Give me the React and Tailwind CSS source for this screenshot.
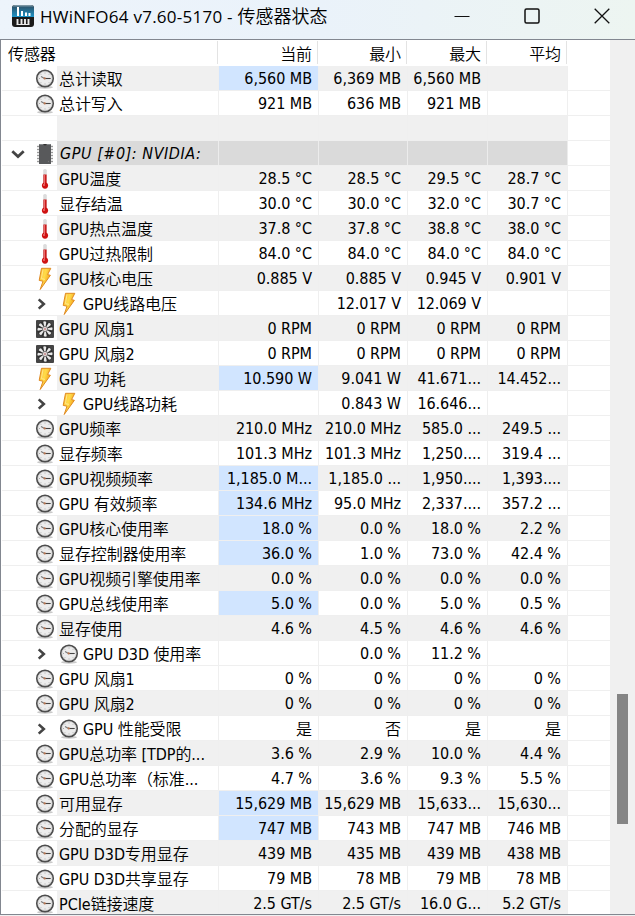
import React from 'react';

const ROWS = [
  { icon: 'clock', name: '总计读取', bg: 'grey', values: ['6,560 MB', '6,369 MB', '6,560 MB', ''], hot: true },
  { icon: 'clock', name: '总计写入', values: ['921 MB', '636 MB', '921 MB', ''] },
  { name: '', bg: 'grey', values: ['', '', '', ''] },
  { icon: 'chip', name: 'GPU [#0]: NVIDIA:', bg: 'group', values: ['', '', '', ''] },
  { icon: 'temp', name: 'GPU温度', bg: 'grey', values: ['28.5 °C', '28.5 °C', '29.5 °C', '28.7 °C'] },
  { icon: 'temp', name: '显存结温', values: ['30.0 °C', '30.0 °C', '32.0 °C', '30.7 °C'] },
  { icon: 'temp', name: 'GPU热点温度', bg: 'grey', values: ['37.8 °C', '37.8 °C', '38.8 °C', '38.0 °C'] },
  { icon: 'temp', name: 'GPU过热限制', values: ['84.0 °C', '84.0 °C', '84.0 °C', '84.0 °C'] },
  { icon: 'bolt', name: 'GPU核心电压', bg: 'grey', values: ['0.885 V', '0.885 V', '0.945 V', '0.901 V'] },
  { icon: 'bolt', name: 'GPU线路电压', sub: true, values: ['', '12.017 V', '12.069 V', ''] },
  { icon: 'fan', name: 'GPU 风扇1', bg: 'grey', values: ['0 RPM', '0 RPM', '0 RPM', '0 RPM'] },
  { icon: 'fan', name: 'GPU 风扇2', values: ['0 RPM', '0 RPM', '0 RPM', '0 RPM'] },
  { icon: 'bolt', name: 'GPU 功耗', bg: 'grey', values: ['10.590 W', '9.041 W', '41.671...', '14.452...'], hot: true },
  { icon: 'bolt', name: 'GPU线路功耗', sub: true, values: ['', '0.843 W', '16.646...', ''] },
  { icon: 'clock', name: 'GPU频率', bg: 'grey', values: ['210.0 MHz', '210.0 MHz', '585.0 ...', '249.5 ...'] },
  { icon: 'clock', name: '显存频率', values: ['101.3 MHz', '101.3 MHz', '1,250....', '319.4 ...'] },
  { icon: 'clock', name: 'GPU视频频率', bg: 'grey', values: ['1,185.0 M...', '1,185.0 ...', '1,950....', '1,393....'], hot: true },
  { icon: 'clock', name: 'GPU 有效频率', values: ['134.6 MHz', '95.0 MHz', '2,337....', '357.2 ...'], hot: true },
  { icon: 'clock', name: 'GPU核心使用率', bg: 'grey', values: ['18.0 %', '0.0 %', '18.0 %', '2.2 %'], hot: true },
  { icon: 'clock', name: '显存控制器使用率', values: ['36.0 %', '1.0 %', '73.0 %', '42.4 %'], hot: true },
  { icon: 'clock', name: 'GPU视频引擎使用率', bg: 'grey', values: ['0.0 %', '0.0 %', '0.0 %', '0.0 %'] },
  { icon: 'clock', name: 'GPU总线使用率', values: ['5.0 %', '0.0 %', '5.0 %', '0.5 %'], hot: true },
  { icon: 'clock', name: '显存使用', bg: 'grey', values: ['4.6 %', '4.5 %', '4.6 %', '4.6 %'] },
  { icon: 'clock', name: 'GPU D3D 使用率', sub: true, values: ['', '0.0 %', '11.2 %', ''] },
  { icon: 'clock', name: 'GPU 风扇1', values: ['0 %', '0 %', '0 %', '0 %'] },
  { icon: 'clock', name: 'GPU 风扇2', bg: 'grey', values: ['0 %', '0 %', '0 %', '0 %'] },
  { icon: 'clock', name: 'GPU 性能受限', sub: true, values: ['是', '否', '是', '是'] },
  { icon: 'clock', name: 'GPU总功率 [TDP的...', bg: 'grey', values: ['3.6 %', '2.9 %', '10.0 %', '4.4 %'] },
  { icon: 'clock', name: 'GPU总功率（标准...', values: ['4.7 %', '3.6 %', '9.3 %', '5.5 %'] },
  { icon: 'clock', name: '可用显存', bg: 'grey', values: ['15,629 MB', '15,629 MB', '15,633...', '15,630...'], hot: true },
  { icon: 'clock', name: '分配的显存', values: ['747 MB', '743 MB', '747 MB', '746 MB'], hot: true },
  { icon: 'clock', name: 'GPU D3D专用显存', bg: 'grey', values: ['439 MB', '435 MB', '439 MB', '438 MB'] },
  { icon: 'clock', name: 'GPU D3D共享显存', values: ['79 MB', '78 MB', '79 MB', '78 MB'] },
  { icon: 'clock', name: 'PCIe链接速度', bg: 'grey', values: ['2.5 GT/s', '2.5 GT/s', '16.0 G...', '5.2 GT/s'] },
];

const COL_WIDTHS = ['w-[100px]', 'w-[89px]', 'w-[80px]', 'w-[80px]'];

const ClockIcon = () => (
  <svg width="20" height="20" viewBox="0 0 20 20">
    <ellipse cx="10" cy="18.2" rx="8" ry="1.5" fill="#c9c9c9" />
    <circle cx="10" cy="9.5" r="8.2" fill="#ececec" stroke="#4d4d4d" strokeWidth="1.7" />
    <circle cx="10" cy="9.5" r="7" fill="none" stroke="#c4c4c4" strokeWidth="0.6" />
    <path d="M10 3.5v1M10 14.5v1M4 9.5h1M15 9.5h1M5.8 5.3l.6.6M14.2 5.3l-.6.6M5.8 13.7l.6-.6M14.2 13.7l-.6-.6" stroke="#999" strokeWidth="0.8" />
    <path d="M9.5 9.5L6 7.5" stroke="#777" strokeWidth="1.1" />
    <path d="M9 9.5h6.5" stroke="#444" strokeWidth="1.1" />
    <circle cx="9.7" cy="9.4" r="1.1" fill="#b9754f" />
  </svg>
);

const TempIcon = () => (
  <svg width="20" height="22" viewBox="0 0 20 22">
    <rect x="8.2" y="1" width="3.6" height="16" rx="1.6" fill="#dcdcdc" />
    <rect x="8.4" y="6.5" width="3.2" height="11" fill="#cc1c1c" />
    <circle cx="10" cy="17.6" r="3.1" fill="#cf1212" />
    <rect x="9" y="7" width="0.9" height="9" fill="#ef7777" />
    <circle cx="9" cy="17" r="0.9" fill="#f08080" />
  </svg>
);

const BoltIcon = () => (
  <svg width="20" height="24" viewBox="0 0 20 24">
    <defs>
      <linearGradient id="bolt" x1="0" y1="0" x2="1" y2="0.5">
        <stop offset="0" stopColor="#fbb12a" />
        <stop offset="0.5" stopColor="#ffdc4a" />
        <stop offset="1" stopColor="#f39a12" />
      </linearGradient>
    </defs>
    <path d="M6.5 1.3H15.8L12.6 7.6L15.4 8.3L5.2 22.5L8 14.2L4.2 13.4Z" fill="url(#bolt)" stroke="#e08a22" strokeWidth="1" strokeLinejoin="round" />
    <path d="M8 2.5L6.4 11.6L10 12.4" fill="none" stroke="#ffe88a" strokeWidth="1" />
  </svg>
);

const FanIcon = () => (
  <svg width="18" height="18" viewBox="0 0 18 18">
    <rect width="18" height="18" rx="1" fill="#454545" />
    <circle cx="9" cy="9" r="8.1" fill="#303030" />
    {[0, 45, 90, 135, 180, 225, 270, 315].map((angle) => (
      <path key={angle} d="M8.2 6.5L7.2 1.8Q9 .8 10.3 2L9.6 6.5Z" fill="#e9e9e9" transform={`rotate(${angle} 9 9)`} />
    ))}
    <circle cx="9" cy="9" r="2.7" fill="#d9d2d2" stroke="#444" strokeWidth="0.5" />
    <circle cx="9" cy="9" r="1" fill="#c98888" />
  </svg>
);

const ChipIcon = () => (
  <svg width="18" height="22" viewBox="0 0 18 22">
    {[3.5, 6.5, 9.5, 12.5, 15.5, 18.5].map((y) => (
      <path key={y} d={`M1 ${y}h16`} stroke="#9a9a9a" strokeWidth="1.4" />
    ))}
    <rect x="3" y="1" width="12" height="20" rx="0.5" fill="#58595b" />
    <path d="M3.5 1.5h11" stroke="#85888a" />
    <path d="M7 1h4q-2 3-4 0" fill="#333" />
    <circle cx="12.5" cy="18.5" r="0.7" fill="#777" />
  </svg>
);

const AppIcon = () => (
  <svg width="22" height="22" viewBox="0 0 22 22">
    <defs>
      <linearGradient id="logo" x1="0" y1="0" x2="0" y2="1">
        <stop offset="0" stopColor="#8fa3ae" />
        <stop offset="0.2" stopColor="#2a5a75" />
        <stop offset="1" stopColor="#1c94c8" />
      </linearGradient>
    </defs>
    <rect width="22" height="22" rx="3" fill="#1a1a1a" />
    <path d="M0 12V3Q0 0 3 0H19Q22 0 22 3V12Z" fill="url(#logo)" />
    <path d="M6 2v9M10 6v5M14 7.5v3.5M17.5 8v3" stroke="#fff" strokeWidth="2" />
    <path d="M5.5 14v5.5M9.5 14v5.5M13 14v5.5M16.5 14v5.5" stroke="#e8e8e8" strokeWidth="1.9" />
    <path d="M4.6 19.5h12.8" stroke="#e8e8e8" strokeWidth="1" />
  </svg>
);

const ICONS = { clock: ClockIcon, temp: TempIcon, bolt: BoltIcon, fan: FanIcon, chip: ChipIcon };

// Latin and full-width runs use different faces
const Label = ({ text, wide }) =>
  text.split(/([\x20-\x7e°]+)/).filter(Boolean).map((part, i) => {
    const latin = /^[\x20-\x7e°]/.test(part);
    return (
      <span
        key={i}
        className={latin ? (wide ? 'tracking-[0.55px]' : 'tracking-[-0.05px]') : "font-['Noto_Sans_CJK_SC',sans-serif] font-[350] tracking-[-0.1px]"}
      >
        {part}
      </span>
    );
  });

const Chevron = ({ down }) => (
  <svg width="14" height="14" viewBox="0 0 14 14" fill="none" stroke="#444" strokeWidth="2.8">
    <path d={down ? 'M1.3 4.3L7 9.5L12.7 4.3' : 'M4 2L9.5 7L4 12'} />
  </svg>
);

const SensorRow = ({ row }) => {
  const Icon = ICONS[row.icon];
  const group = row.bg === 'group';
  const fill = group ? 'bg-[#dadada]' : row.bg === 'grey' ? 'bg-[#f0f0f0]' : 'bg-white';
  const line = group ? 'border-[#ececec]' : 'border-[#efefef]';

  return (
    <div className="flex h-[25px] shrink-0 border-b border-[#efefef]">
      <div className="flex w-[55px] shrink-0 items-center pt-px">
        <div className="flex w-[33px] justify-center pr-[2px]">{group && <Chevron down />}</div>
        <div className={`flex w-5 justify-center ${row.sub ? 'pr-[7px]' : ''}`}>{row.sub ? <Chevron /> : Icon && <Icon />}</div>
      </div>
      <div className={`flex w-[162px] shrink-0 items-center whitespace-pre border-r pt-[2px] ${fill} ${line} ${group ? 'pl-[3px] italic' : 'pl-[2px]'}`}>
        {row.sub && <span className="flex w-6 shrink-0"><Icon /></span>}
        <span><Label text={row.name} wide={group} /></span>
      </div>
      {row.values.map((value, i) => (
        <div
          key={i}
          className={`flex shrink-0 items-center justify-end whitespace-pre border-r pr-[6px] pt-[2px] ${COL_WIDTHS[i]} ${line} ${i === 0 && row.hot ? 'bg-[#d1e5ff]' : fill}`}
        >
          <span><Label text={value} /></span>
        </div>
      ))}
    </div>
  );
};

const TitleBar = () => (
  <div className="flex h-[39px] shrink-0 items-center bg-gradient-to-r from-[#edf4fb] via-[#eaf2fa] to-[#edf5f1] pb-[7px] pl-3">
    <AppIcon />
    <h1 className="ml-[6px] flex-1 whitespace-pre font-['Open_Sans','Noto_Sans_CJK_SC',sans-serif] text-[17px] text-black">
      <span className="tracking-[0.25px]">HWiNFO64 v7.60-5170 - </span>
      <span className="font-['Noto_Sans_CJK_SC',sans-serif] text-[18px] font-[350]">传感器状态</span>
    </h1>
    <div className="flex items-center gap-[54px] pr-[25px]">
      <svg width="16" height="16" viewBox="0 0 16 16"><path d="M0.5 8.5h15" stroke="#111" /></svg>
      <svg width="16" height="16" viewBox="0 0 16 16" fill="none" stroke="#111" strokeWidth="1.5"><rect x="1" y="1" width="14" height="14" rx="1.5" /></svg>
      <svg width="16" height="16" viewBox="0 0 16 16" stroke="#111" strokeWidth="1.3"><path d="M.7.7l14.6 14.6M15.3.7L.7 15.3" /></svg>
    </div>
  </div>
);

const App = () => {
  return (
    <div className="flex h-[916px] w-[635px] flex-col overflow-hidden bg-[#f0f0f0] font-['DejaVu_Sans_Condensed','DejaVu_Sans','Noto_Sans_CJK_SC',sans-serif] text-[16px] leading-6 text-black">
      <TitleBar />
      <div className="flex h-[876px] border-y border-l border-[#828790]">
        <div className="flex w-[609px] flex-col overflow-hidden bg-white pl-px">
          <div className="flex h-[26px] shrink-0 pt-px">
            <div className="mb-[2px] flex w-[216px] items-center border-r border-[#e3e3e3] pl-[6px] pt-px"><Label text="传感器" /></div>
            {['当前', '最小', '最大', '平均'].map((title, i) => (
              <div key={title} className={`mb-[2px] flex shrink-0 items-center justify-end border-r border-[#e3e3e3] pr-[5px] pt-px ${COL_WIDTHS[i]}`}>
                <Label text={title} />
              </div>
            ))}
          </div>
          {ROWS.map((row, i) => (
            <SensorRow key={i} row={row} />
          ))}
        </div>
        <div className="flex flex-1 flex-col items-center bg-[#f0f0f0] pr-[1px] pt-[654px]">
          <div className="h-[130px] w-[11px] bg-[#858585]" />
        </div>
      </div>
    </div>
  );
};

export default App;
